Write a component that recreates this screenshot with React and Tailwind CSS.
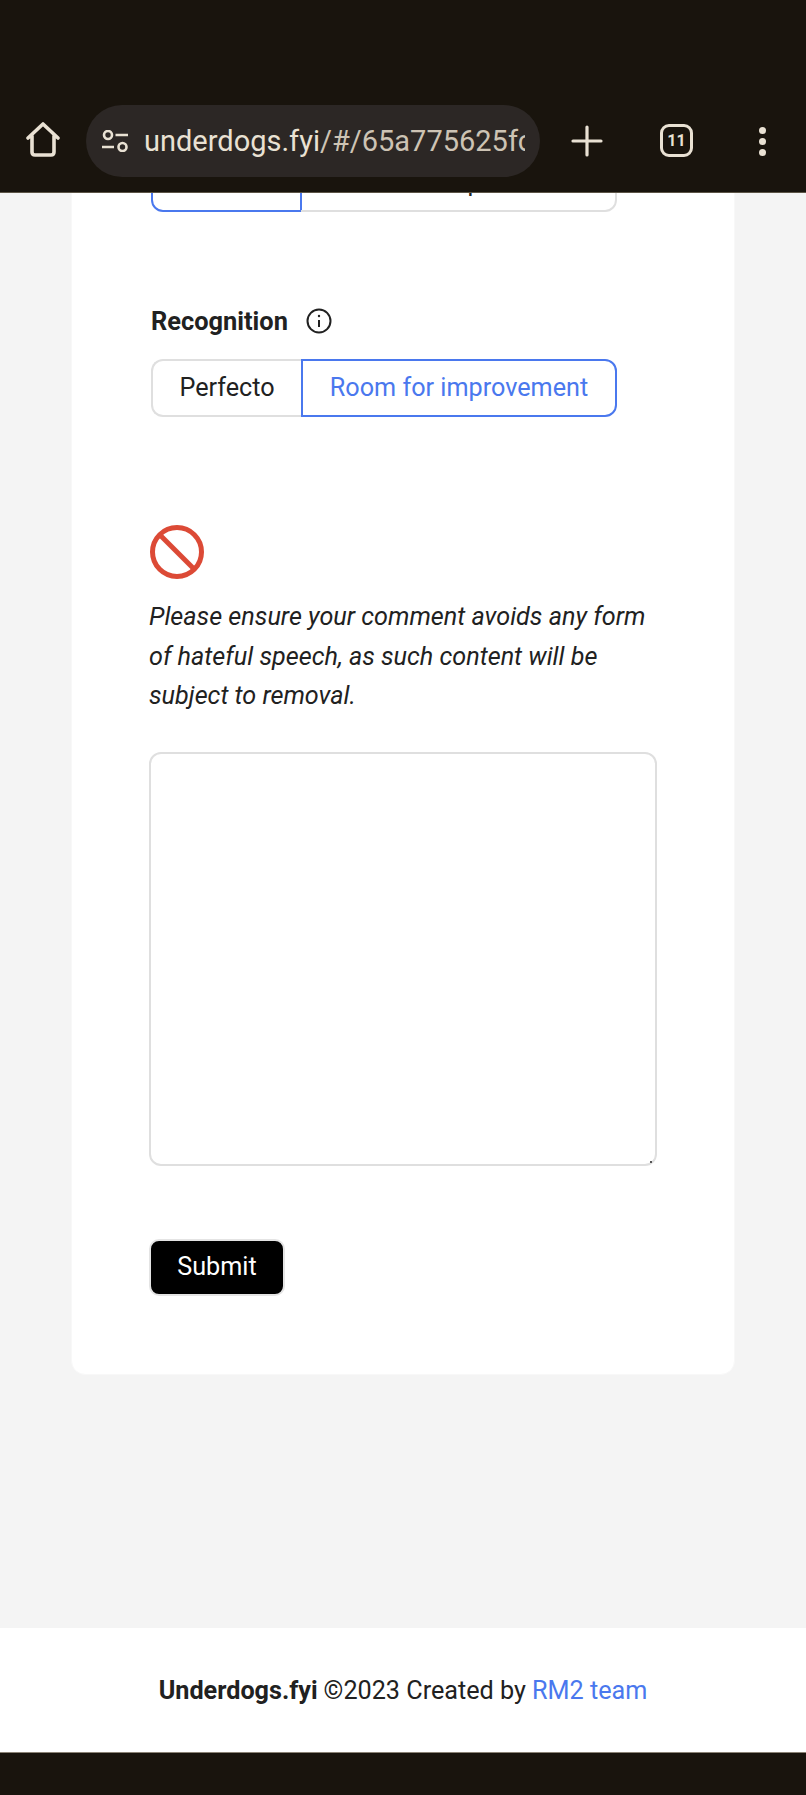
export default function App() {
  const seg = "h-[58px] flex items-center justify-center border-2 text-[25.2px]";
  return (
    <div className="h-[1795px] w-[806px] flex flex-col bg-[#f4f4f4] overflow-hidden text-[#212121]" style={{ fontFamily: 'Roboto, "Liberation Sans", sans-serif' }}>
      <header className="h-[193px] shrink-0 bg-[#19140d] border-b border-[#5c5547] flex items-start pt-[105px] relative z-10">
        <svg width="34" height="36" viewBox="0 0 34 36" fill="none" className="ml-[26px] mt-[17px] shrink-0" stroke="#e9e1d3" strokeWidth="3.6" strokeLinejoin="round" strokeLinecap="round">
          <path d="M2 16 L17 2 L32 16 M6 14 V30 Q6 33 9 33 H25 Q28 33 28 30 V14" />
        </svg>
        <div className="ml-[26px] w-[454px] h-[72px] rounded-full bg-[#2c2725] flex items-center pl-[16px] pr-[15px] shrink-0">
          <svg width="26" height="22" viewBox="0 0 26 22" fill="none" className="shrink-0" stroke="#e9e1d3" strokeWidth="2.6">
            <circle cx="6" cy="5" r="4" />
            <path d="M13.5 5 H26 M0 17 H12" />
            <circle cx="20.5" cy="17" r="4" />
          </svg>
          <div className="ml-[16px] overflow-hidden whitespace-nowrap text-[29px] leading-[72px] text-[#cdc3b4]">
            <span className="text-[#e9e1d3]">underdogs.fyi</span>/#/65a775625fc3e7a1b2
          </div>
        </div>
        <svg width="32" height="32" viewBox="0 0 32 32" fill="none" className="ml-[31px] mt-[20px] shrink-0" stroke="#e9e1d3" strokeWidth="3.2" strokeLinecap="round">
          <path d="M2 16 H30 M16 2 V30" />
        </svg>
        <div className="ml-[57px] mt-[19px] w-[33px] h-[33px] rounded-[9px] border-[3px] border-[#e9e1d3] shrink-0 flex items-center justify-center text-[#e9e1d3] text-[16px] font-bold leading-none">11</div>
        <div className="ml-[66px] mt-[22px] w-[7px] flex flex-col gap-[4px] shrink-0">
          <div className="w-[7px] h-[7px] rounded-full bg-[#e9e1d3]" />
          <div className="w-[7px] h-[7px] rounded-full bg-[#e9e1d3]" />
          <div className="w-[7px] h-[7px] rounded-full bg-[#e9e1d3]" />
        </div>
      </header>

      <main className="flex-1 min-h-0 overflow-hidden">
        <div className="mx-[71px] -mt-[40px] h-[1222px] bg-white rounded-b-[14px] border border-[#f8f8f8] pl-[78px] pr-[77px]">
          <div className="flex ml-[1px]">
            <div className={`${seg} w-[151px] rounded-l-[12px] border-[#4a78ee] text-[#4a78ee]`}>Perfecto</div>
            <div className={`${seg} w-[316px] -ml-[1px] rounded-r-[12px] border-l-0 border-[#dfdfdf]`}>Room for improvement</div>
          </div>

          <div className="mt-[89px] ml-[1px] h-[40px] flex items-center">
            <span className="text-[25.4px] font-bold">Recognition</span>
            <svg width="26" height="26" viewBox="0 0 26 26" fill="none" className="ml-[18px]" stroke="#212121" strokeWidth="2">
              <circle cx="13" cy="13" r="11.5" />
              <path d="M13 12 V19" />
              <circle cx="13" cy="8" r="1.2" fill="#212121" stroke="none" />
            </svg>
          </div>

          <div className="flex ml-[1px] mt-[18px]">
            <div className={`${seg} w-[150px] rounded-l-[12px] border-r-0 border-[#dfdfdf]`}>Perfecto</div>
            <div className={`${seg} w-[316px] rounded-r-[12px] border-[#4a78ee] text-[#4a78ee]`}>Room for improvement</div>
          </div>

          <svg width="56" height="56" viewBox="0 0 56 56" fill="none" className="mt-[107px] -ml-[1px] block" stroke="#dc4a36" strokeWidth="5">
            <circle cx="28" cy="28" r="24.5" />
            <path d="M11 11 L45 45" />
          </svg>

          <p className="mt-[17px] -ml-[1px] text-[25.2px] leading-[39.5px] italic w-[510px]">
            Please ensure your comment avoids any form of hateful speech, as such content will be subject to removal.
          </p>

          <div className="relative mt-[36px] -ml-[1px] h-[414px] w-[508px]">
            <textarea className="block w-full h-full resize-none rounded-[12px] border-2 border-[#dfdfdf] bg-white outline-none" />
            <div className="absolute right-[5px] bottom-[3px] w-[2px] h-[2px] bg-[#555]" />
          </div>

          <button className="mt-[73px] -ml-[1px] block w-[136px] h-[57px] rounded-[10px] bg-black border-2 border-[#e4e4e4] text-white text-[25.2px]">Submit</button>
        </div>
      </main>

      <footer className="h-[124px] shrink-0 bg-white flex items-center justify-center text-[25.2px] pt-[2px]">
        <span className="font-bold">Underdogs.fyi</span>
        <span className="ml-[6px]">©2023 Created by</span>
        <span className="ml-[6px] text-[#4a78ee]">RM2 team</span>
      </footer>
      <div className="h-[43px] shrink-0 bg-[#19140d] border-t border-[#8a8275]" />
    </div>
  );
}
